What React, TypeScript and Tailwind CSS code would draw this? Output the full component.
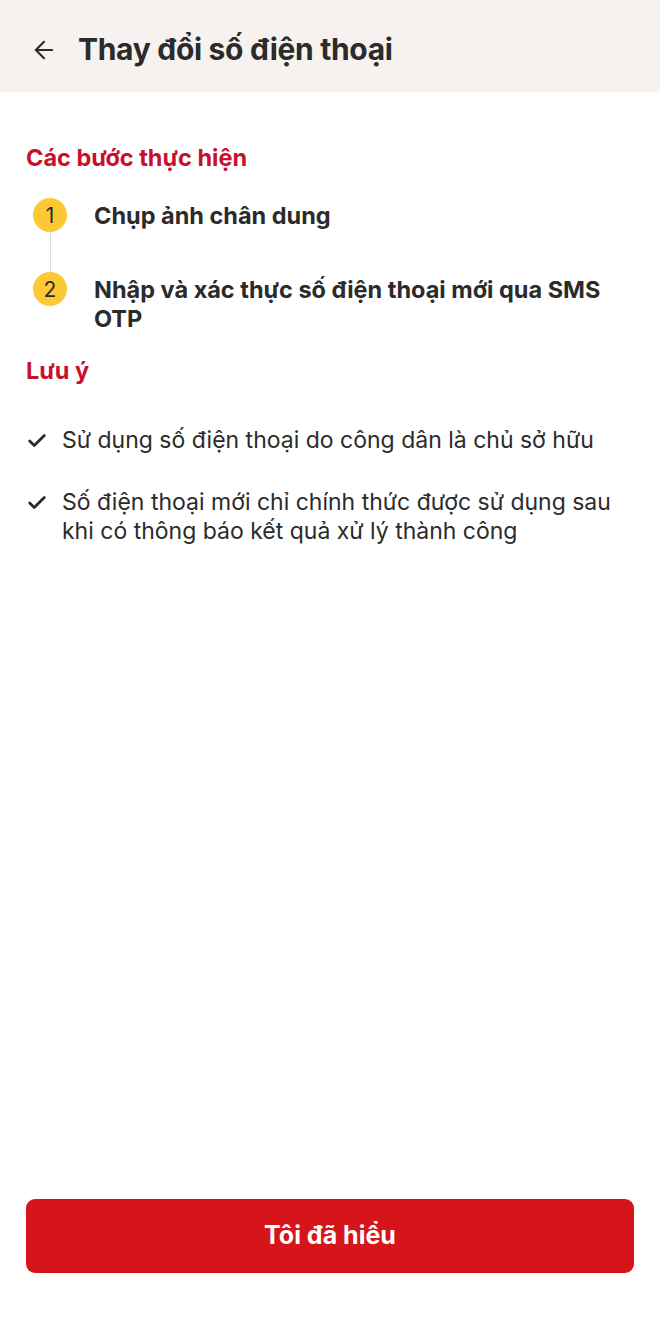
import { ArrowLeft, Check } from "lucide-react";

const steps = [
  { n: 1, text: "Chụp ảnh chân dung" },
  { n: 2, text: "Nhập và xác thực số điện thoại mới qua SMS OTP" },
];

const notes = [
  "Sử dụng số điện thoại do công dân là chủ sở hữu",
  "Số điện thoại mới chỉ chính thức được sử dụng sau khi có thông báo kết quả xử lý thành công",
];

export default function App() {
  return (
    <div className="min-h-screen h-[1325px] flex flex-col bg-white text-[#2b2b2b] font-['Inter',sans-serif]">
      {/* Header */}
      <div className="h-[92px] bg-[#f6f2ef] flex items-center px-[30px] gap-[20px] shrink-0 pt-[8px]">
        <ArrowLeft className="w-[28px] h-[28px] text-[#2b2b2b]" strokeWidth={1.8} />
        <h1 className="text-[30px] font-bold tracking-[-0.3px] leading-none pb-[2px]">Thay đổi số điện thoại</h1>
      </div>

      <div className="px-[26px] pt-[52px] flex flex-col">
        <h2 className="text-[23.5px] font-bold text-[#c8102e] leading-[28px]">Các bước thực hiện</h2>

        {/* Steps */}
        <div className="mt-[26px] flex flex-col pl-[7px]">
          {steps.map((s, i) => (
            <div key={s.n} className="flex gap-[27px]">
              <div className="flex flex-col items-center w-[34px] shrink-0">
                <div className="w-[34px] h-[34px] rounded-full bg-[#fcc934] flex items-center justify-center text-[21px] text-[#2b2b2b] leading-none">
                  {s.n}
                </div>
                {i < steps.length - 1 && <div className="w-[1px] flex-1 bg-[#dcdcdc]" />}
              </div>
              <p className={`text-[23.5px] font-bold leading-[29px] pt-[3px] ${i < steps.length - 1 ? "pb-[42px]" : ""}`}>
                {s.text}
              </p>
            </div>
          ))}
        </div>

        <h2 className="mt-[24px] text-[23.5px] font-bold text-[#c8102e] leading-[28px]">Lưu ý</h2>

        {/* Notes */}
        <div className="mt-[41px] flex flex-col gap-[33px]">
          {notes.map((t) => (
            <div key={t} className="flex gap-[14px]">
              <Check className="w-[22px] h-[22px] mt-[4px] shrink-0 text-[#2b2b2b]" strokeWidth={3} />
              <p className="text-[23px] leading-[29px]">{t}</p>
            </div>
          ))}
        </div>
      </div>

      <div className="mt-auto px-[26px] pb-[52px]">
        <button className="w-full h-[74px] rounded-[9px] bg-[#d6151a] text-white text-[25px] font-bold">
          Tôi đã hiểu
        </button>
      </div>
    </div>
  );
}
